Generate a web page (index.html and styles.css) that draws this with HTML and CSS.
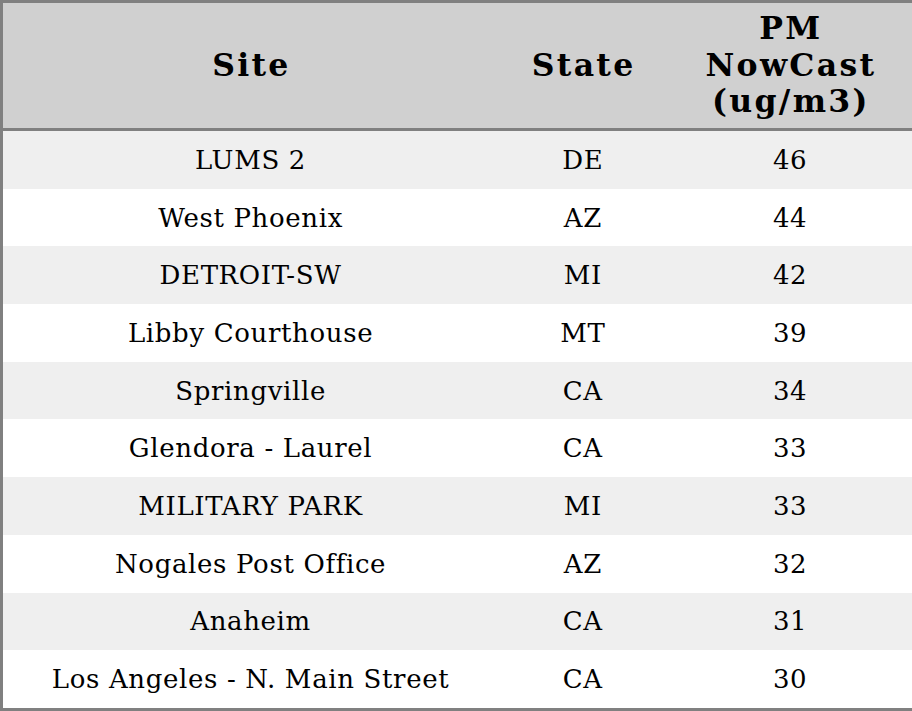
FILE: index.html
```html
<!DOCTYPE html>
<html>
<head>
<meta charset="utf-8">
<link rel="stylesheet" href="styles.css">
</head>
<body>
<table class="aq">
  <colgroup>
    <col class="c-site">
    <col class="c-state">
    <col class="c-pm">
  </colgroup>
  <thead>
    <tr><th>Site</th><th>State</th><th>PM<br>NowCast<br>(ug/m3)</th></tr>
  </thead>
  <tbody>
    <tr><td>LUMS 2</td><td>DE</td><td>46</td></tr>
    <tr><td>West Phoenix</td><td>AZ</td><td>44</td></tr>
    <tr><td>DETROIT-SW</td><td>MI</td><td>42</td></tr>
    <tr><td>Libby Courthouse</td><td>MT</td><td>39</td></tr>
    <tr><td>Springville</td><td>CA</td><td>34</td></tr>
    <tr><td>Glendora - Laurel</td><td>CA</td><td>33</td></tr>
    <tr><td>MILITARY PARK</td><td>MI</td><td>33</td></tr>
    <tr><td>Nogales Post Office</td><td>AZ</td><td>32</td></tr>
    <tr><td>Anaheim</td><td>CA</td><td>31</td></tr>
    <tr><td>Los Angeles - N. Main Street</td><td>CA</td><td>30</td></tr>
  </tbody>
</table>
</body>
</html>
```
FILE: styles.css
```css
html, body {
  margin: 0;
  padding: 0;
  background: #ffffff;
}
.aq {
  width: 912px;
  border-collapse: collapse;
  border: 3px solid #808080;
  font-family: "DejaVu Serif", serif;
  color: #000;
  table-layout: fixed;
}
.c-site { width: 496px; }
.c-state { width: 170px; }
.c-pm { width: 246px; }
.aq th {
  background: #d0d0d0;
  font-size: 31.5px;
  font-weight: bold;
  line-height: 36.5px;
  letter-spacing: 2.3px;
  height: 123.5px;
  padding: 0 0 1.5px 2.3px;
  text-align: center;
  vertical-align: middle;
  border-bottom: 3px solid #808080;
}
.aq td {
  font-size: 26px;
  line-height: 30px;
  letter-spacing: 0.65px;
  height: 57.7px;
  padding: 0 0 0 0.65px;
  text-align: center;
  vertical-align: middle;
}
.aq tbody tr:nth-child(odd) td {
  background: #efefef;
}
```
